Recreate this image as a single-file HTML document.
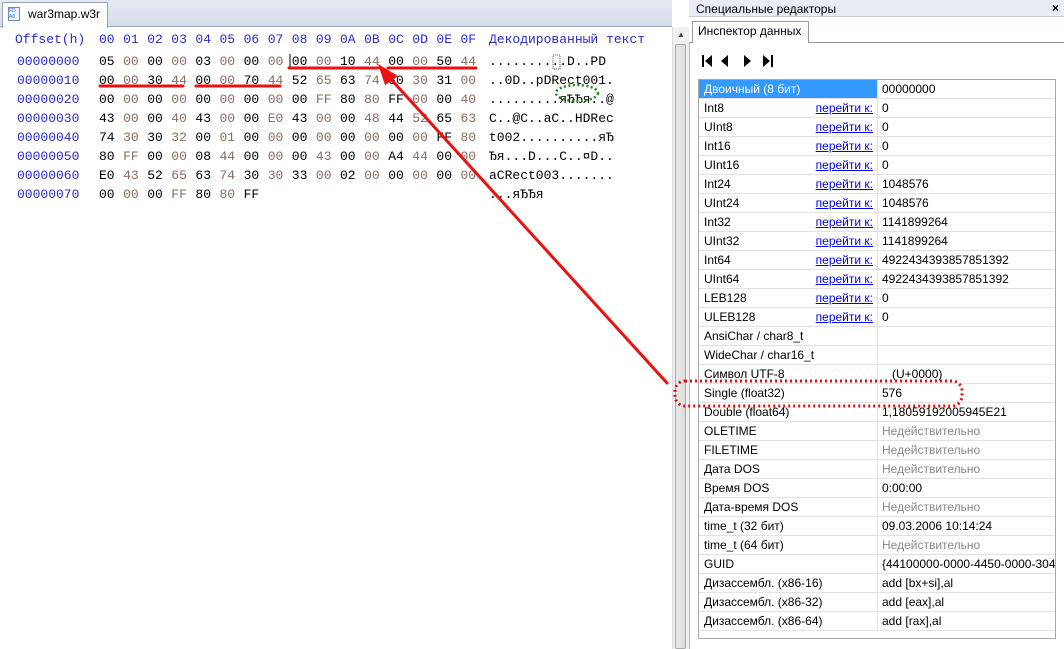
<!DOCTYPE html>
<html><head><meta charset="utf-8"><style>
*{margin:0;padding:0;box-sizing:border-box}
body{width:1064px;height:649px;overflow:hidden;background:#fff;position:relative;font-family:"Liberation Sans",sans-serif;font-size:12px}
.abs{position:absolute}
.mono{font-family:"Liberation Mono",monospace;font-size:13px;white-space:pre;position:absolute;line-height:19px}
.b{color:#000}.o{color:#8a6a60}.off{color:#2a2acc}
table{border-collapse:collapse;position:absolute;left:698px;top:79px;width:358px;table-layout:fixed}
td{height:19px;border:1px solid #e2e2e2;padding:0 5px;font-size:12px;white-space:nowrap;overflow:hidden}
td.l{width:179px;position:relative}
td a{color:#0000ee;text-decoration:underline;position:absolute;right:4px;top:2px}
.g{color:#888}
</style></head><body>
<div class="abs" style="left:0;top:0;width:672px;height:27px;background:linear-gradient(#e6e9f2,#d6dcea);border-bottom:1px solid #9aa4b8"></div>
<div class="abs" style="left:2px;top:2px;width:106px;height:26px;background:#fff;border:1px solid #9aa4b8;border-bottom:none"></div>
<div class="abs" style="left:8px;top:7px;width:12px;height:14px;border:1px solid #6b8bb8;background:#eef3fb;font-size:5px;color:#36c;line-height:6px">FD<br>A0</div>
<div class="abs" style="left:28px;top:7px;font-size:12px">war3map.w3r</div>
<div class="abs" style="left:672px;top:27px;width:17px;height:622px;background:#f0f0f0;border-left:1px solid #ddd"></div>
<div class="abs" style="left:675px;top:44px;width:11px;height:605px;background:linear-gradient(90deg,#e8e8e8,#dcdcdc);border:1px solid #aaa;border-radius:2px"></div>
<div class="abs" style="left:677px;top:30px;font-size:8px;color:#444">▲</div>
<div class="mono off" style="left:15px;top:30px">Offset(h)</div>
<div class="mono off" style="left:489px;top:30px">Декодированный текст</div>
<div id="hex"></div>
<div class="abs" style="left:689px;top:0;width:375px;height:17px;background:#e9ecf4;border-bottom:1px solid #c5cbd8"></div>
<div class="abs" style="left:696px;top:2px;font-size:12px">Специальные редакторы</div>
<div class="abs" style="left:1052px;top:1px;font-size:12px;font-weight:bold">×</div>
<div class="abs" style="left:689px;top:42px;width:375px;height:607px;border-left:1px solid #bbb;border-top:1px solid #999"></div>
<div class="abs" style="left:692px;top:21px;width:117px;height:22px;background:#fff;border:1px solid #999;border-bottom:none"></div>
<div class="abs" style="left:698px;top:24px;font-size:12px">Инспектор данных</div>
<svg class="abs" style="left:700px;top:53px" width="90" height="16">
<rect x="2" y="2" width="2" height="12"/><path d="M5 8 L12 2 L12 14Z"/>
<path d="M21 8 L28 2 L28 14Z"/>
<path d="M44 2 L51 8 L44 14Z"/>
<path d="M63 2 L70 8 L63 14Z"/><rect x="71" y="2" width="2" height="12"/>
</svg>
<table id="t"></table>
<div class="abs" style="left:698px;top:79px;width:358px;height:560px;border:1px solid #aaa;pointer-events:none"></div>
<svg class="abs" style="left:0;top:0" width="1064" height="649">
<g stroke="#ee1010" stroke-width="3" stroke-linecap="round">
<line x1="289" y1="68" x2="378" y2="68"/><line x1="388" y1="68" x2="476" y2="68"/>
<line x1="100" y1="86" x2="183" y2="86"/><line x1="196" y1="86" x2="280" y2="86"/>
<line x1="667" y1="383" x2="388" y2="76"/>
</g>
<path d="M378 64 L398 76 L385 85Z" fill="#ee1010"/>
<line x1="290" y1="54" x2="290" y2="67" stroke="#000" stroke-width="1"/>
<rect x="553" y="55" width="7" height="14" fill="none" stroke="#555" stroke-dasharray="1,1"/>
<rect x="675" y="381" width="287" height="25" rx="10" fill="none" stroke="#e01010" stroke-width="3" stroke-dasharray="2,3"/>
<ellipse cx="577" cy="93" rx="21" ry="8" fill="none" stroke="#1a8a1a" stroke-width="2.5" stroke-dasharray="2,2.5"/>
</svg>
<script>
var rows=[["00000000","05 00 00 00 03 00 00 00 00 00 10 44 00 00 50 44","..........D..PD"],
["00000010","00 00 30 44 00 00 70 44 52 65 63 74 30 30 31 00","..0D..pDRect001."],
["00000020","00 00 00 00 00 00 00 00 00 FF 80 80 FF 00 00 40",".........яЂЂя..@"],
["00000030","43 00 00 40 43 00 00 E0 43 00 00 48 44 52 65 63","C..@C..aC..HDRec"],
["00000040","74 30 30 32 00 01 00 00 00 00 00 00 00 00 FF 80","t002..........яЂ"],
["00000050","80 FF 00 00 08 44 00 00 00 43 00 00 A4 44 00 00","Ђя...D...C..¤D.."],
["00000060","E0 43 52 65 63 74 30 30 33 00 02 00 00 00 00 00","aCRect003......."],
["00000070","00 00 00 FF 80 80 FF","...яЂЂя"]];
var h="";
"00 01 02 03 04 05 06 07 08 09 0A 0B 0C 0D 0E 0F".split(" ").forEach(function(b,j){h+='<div class="mono off" style="left:'+(99+j*24.1)+'px;top:30px">'+b+'</div>';});
rows.forEach(function(r,i){var y=52+i*19;
h+='<div class="mono off" style="left:17px;top:'+y+'px">'+r[0]+'</div>';
r[1].split(" ").forEach(function(b,j){h+='<div class="mono '+(j%2?'o':'b')+'" style="left:'+(99+j*24.1)+'px;top:'+y+'px">'+b+'</div>';});
h+='<div class="mono b" style="left:489px;top:'+y+'px">'+r[2]+'</div>';});
document.getElementById("hex").innerHTML=h;
var L='<a>перейти к:</a>';
var d=[["Двоичный (8 бит)","00000000",0],["Int8","0",1],["UInt8","0",1],["Int16","0",1],["UInt16","0",1],["Int24","1048576",1],["UInt24","1048576",1],["Int32","1141899264",1],["UInt32","1141899264",1],["Int64","4922434393857851392",1],["UInt64","4922434393857851392",1],["LEB128","0",1],["ULEB128","0",1],["AnsiChar / char8_t","",0],["WideChar / char16_t","",0],["Символ UTF-8","&nbsp;&nbsp;&nbsp;(U+0000)",0],["Single (float32)","576",0],["Double (float64)","1,18059192005945E21",0],["OLETIME","Недействительно",2],["FILETIME","Недействительно",2],["Дата DOS","Недействительно",2],["Время DOS","0:00:00",0],["Дата-время DOS","Недействительно",2],["time_t (32 бит)","09.03.2006 10:14:24",0],["time_t (64 бит)","Недействительно",2],["GUID","{44100000-0000-4450-0000-30440",0],["Дизассембл. (x86-16)","add [bx+si],al",0],["Дизассембл. (x86-32)","add [eax],al",0],["Дизассембл. (x86-64)","add [rax],al",0]];
var t="";d.forEach(function(r,i){t+='<tr><td class="l"'+(i==0?' style="background:#3399ff;color:#fff"':'')+'>'+r[0]+(r[2]==1?L:'')+'</td><td'+(r[2]==2?' class="g"':'')+' style="padding-left:4px">'+r[1]+'</td></tr>';});
document.getElementById("t").innerHTML=t;
</script>
</body></html>
